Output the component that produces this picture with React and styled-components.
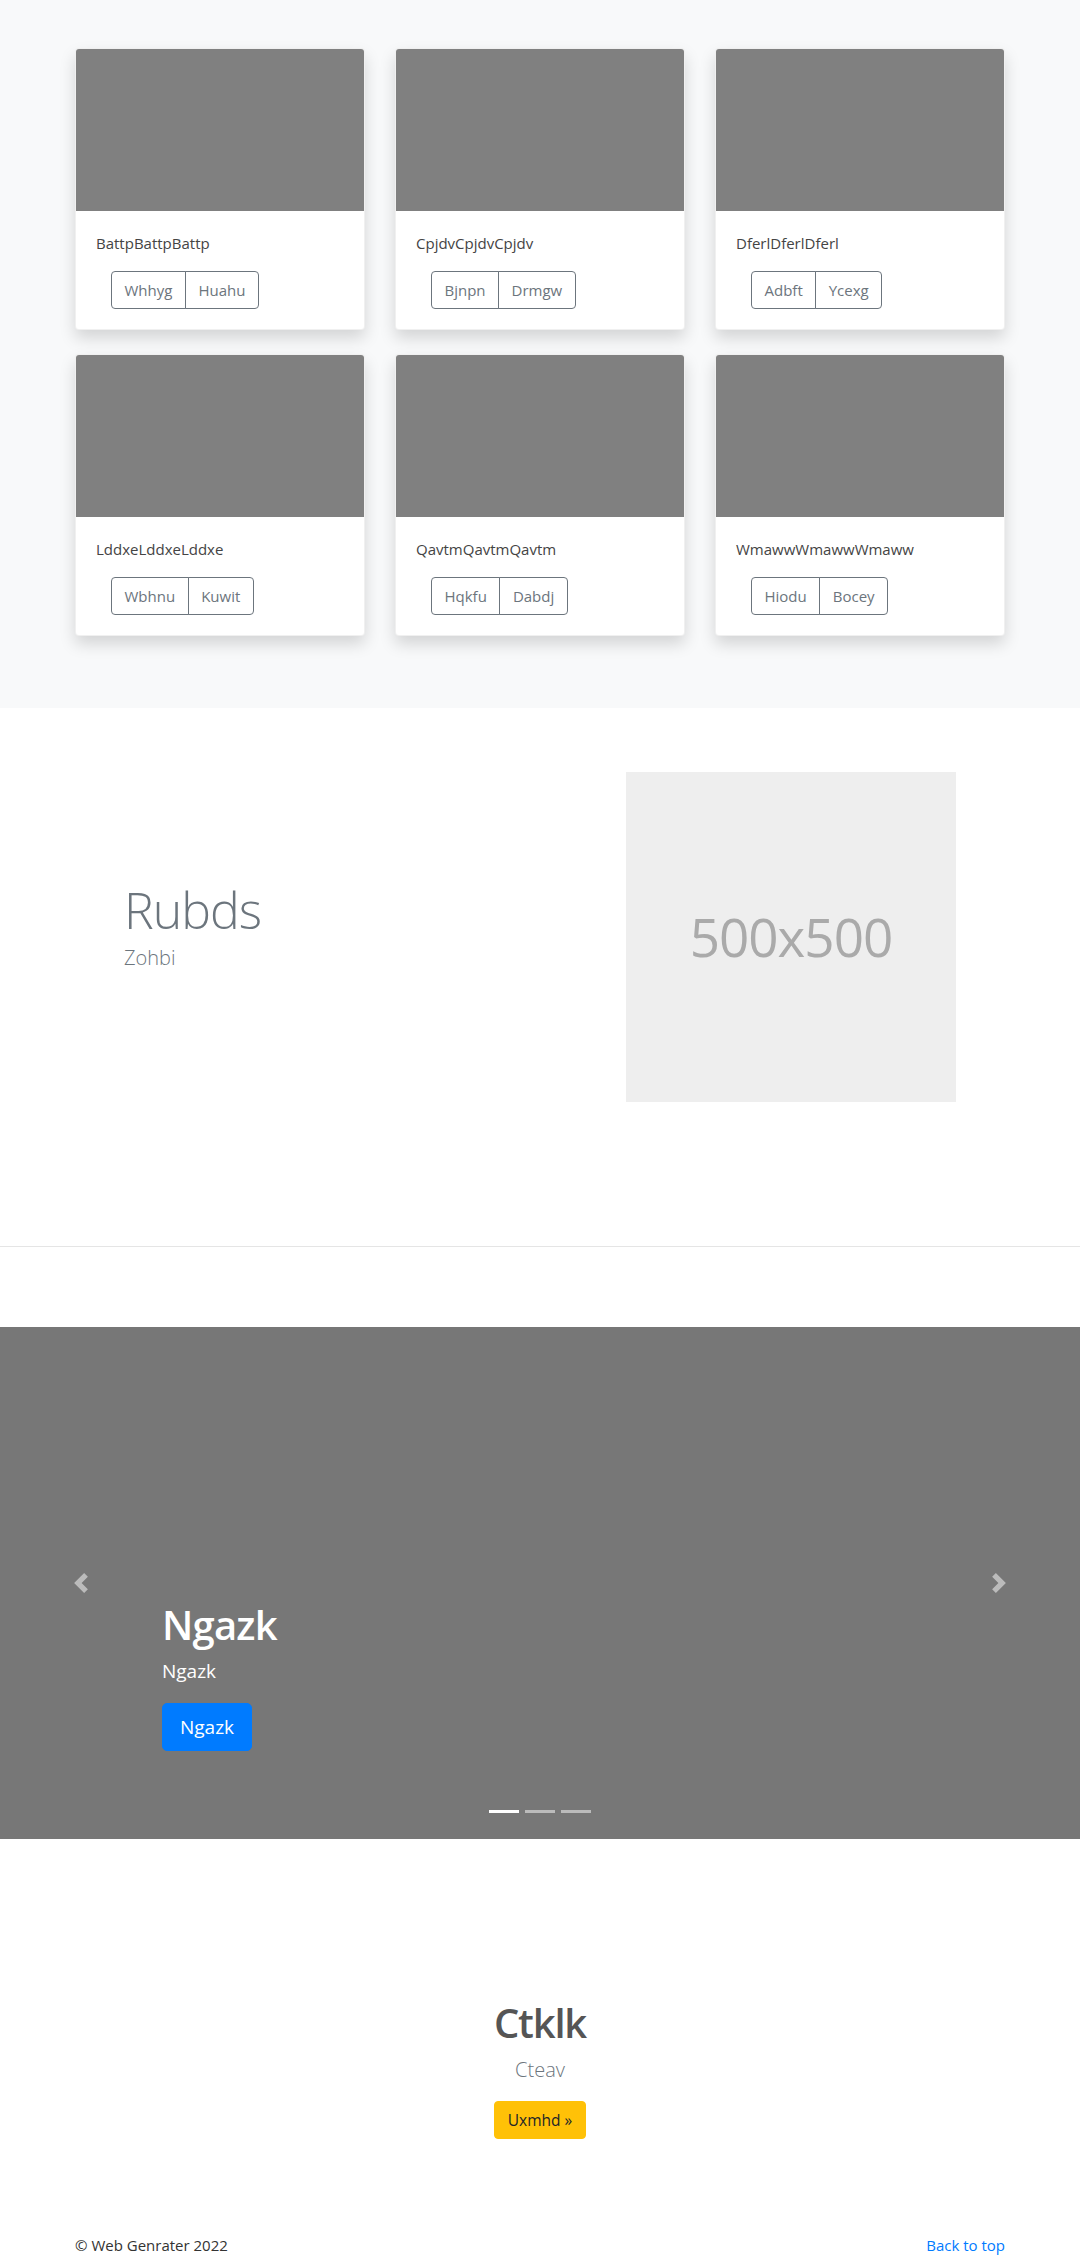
import React from "react";
import styled, { createGlobalStyle } from "styled-components";

const Global = createGlobalStyle`
  html, body { margin: 0; padding: 0; }
  body {
    font-family: "Open Sans", "Noto Sans", sans-serif;
    font-size: 16px;
    line-height: 1.5;
    color: #212529;
    background: #fff;
  }
  * { box-sizing: border-box; }
`;

const Container = styled.div`
  width: 930px;
  margin: 0 auto;
`;

const Album = styled.section`
  background: #f8f9fa;
  padding: 48px 0 72px;
`;

const CardGrid = styled.div`
  display: grid;
  grid-template-columns: repeat(3, 1fr);
  column-gap: 30px;
  row-gap: 24px;
`;

const Card = styled.div`
  background: #fff;
  border: 1px solid rgba(0, 0, 0, 0.06);
  border-radius: 4px;
  overflow: hidden;
  box-shadow: 0 8px 16px rgba(0, 0, 0, 0.15);
`;

const Thumb = styled.div`
  height: 162px;
  background: #808080;
`;

const CardBody = styled.div`
  padding: 20px;
`;

const CardText = styled.p`
  margin: 0 0 16px;
  font-size: 15px;
  line-height: 24px;
  color: #444;
`;

const BtnGroup = styled.div`
  display: inline-flex;
  margin-left: 15px;
`;

const OutlineBtn = styled.button`
  font-family: inherit;
  font-size: 15px;
  line-height: 24px;
  padding: 6px 12.5px;
  color: #6c757d;
  background: transparent;
  border: 1px solid #6c757d;
  border-radius: ${(p) => (p.$first ? "4px 0 0 4px" : "0 4px 4px 0")};
  margin-left: ${(p) => (p.$first ? "0" : "-1px")};
`;

const Featurette = styled.section`
  padding: 64px 0;
`;

const FeatRow = styled.div`
  display: grid;
  grid-template-columns: 1fr 330px;
  align-items: center;
  padding: 0 49px 0 49px;
`;

const FeatText = styled.div``;

const FeatHeading = styled.h2`
  margin: 0 0 8px;
  font-size: 50px;
  font-weight: 300;
  line-height: 1;
  letter-spacing: -1px;
  color: #6c757d;
`;

const Lead = styled.p`
  margin: 0 0 16px;
  font-size: 20px;
  font-weight: 300;
  color: #6c757d;
`;

const Placeholder = styled.div`
  width: 330px;
  height: 330px;
  background: #eee;
  display: flex;
  align-items: center;
  justify-content: center;
  color: #aaa;
  font-size: 53px;
  letter-spacing: -1px;
`;

const Divider = styled.hr`
  margin: 80px 0;
  border: 0;
  border-top: 1px solid #e5e5e5;
`;

const Carousel = styled.section`
  position: relative;
  height: 512px;
  background: #777;
  display: flex;
  align-items: flex-end;
  padding: 0 15% 88px;
`;

const Caption = styled.div`
  color: #fff;
`;

const CaptionTitle = styled.h1`
  margin: 0 0 8px;
  font-size: 40px;
  font-weight: 600;
  line-height: 1.2;
  letter-spacing: -0.8px;
`;

const CaptionText = styled.p`
  margin: 0 0 18px;
  font-size: 19px;
`;

const PrimaryBtn = styled.button`
  font-family: inherit;
  font-size: 19px;
  line-height: 30px;
  padding: 8px 17px;
  color: #fff;
  background: #007bff;
  border: 1px solid #007bff;
  border-radius: 5px;
`;

const Control = styled.div`
  position: absolute;
  top: 0;
  bottom: 0;
  width: 15%;
  ${(p) => (p.$side === "left" ? "left: 0;" : "right: 0;")}
  display: flex;
  align-items: center;
  justify-content: center;
`;

const Indicators = styled.div`
  position: absolute;
  left: 0;
  right: 0;
  bottom: 26px;
  display: flex;
  justify-content: center;
  gap: 6px;
`;

const Indicator = styled.span`
  width: 30px;
  height: 3px;
  background: #fff;
  opacity: ${(p) => (p.$active ? 1 : 0.5)};
`;

const Marketing = styled.section`
  padding: 160px 0 48px;
  text-align: center;
`;

const MarketTitle = styled.h1`
  margin: 0 0 8px;
  font-size: 40px;
  font-weight: 600;
  line-height: 1.2;
  letter-spacing: -1.2px;
  color: #555;
`;

const WarningBtn = styled.button`
  font-family: inherit;
  font-size: 15.5px;
  line-height: 24px;
  padding: 6px 13px;
  color: #212529;
  background: #ffc107;
  border: 1px solid #ffc107;
  border-radius: 4px;
`;

const Footer = styled.footer`
  padding-top: 47px;
`;

const FooterRow = styled(Container)`
  display: flex;
  justify-content: space-between;
  font-size: 15px;
`;

const FooterText = styled.p`
  margin: 0;
  color: #333;
`;

const FooterLink = styled.a`
  color: #007bff;
  text-decoration: none;
`;

const Chevron = ({ dir }) => (
  <svg width="20" height="20" viewBox="0 0 8 8" fill="#fff" opacity="0.5">
    {dir === "left" ? (
      <path d="M5.25 0l-4 4 4 4 1.5-1.5L4.25 4l2.5-2.5L5.25 0z" />
    ) : (
      <path d="M2.75 0l-1.5 1.5L3.75 4l-2.5 2.5L2.75 8l4-4-4-4z" />
    )}
  </svg>
);

const cards = [
  ["BattpBattpBattp", "Whhyg", "Huahu"],
  ["CpjdvCpjdvCpjdv", "Bjnpn", "Drmgw"],
  ["DferlDferlDferl", "Adbft", "Ycexg"],
  ["LddxeLddxeLddxe", "Wbhnu", "Kuwit"],
  ["QavtmQavtmQavtm", "Hqkfu", "Dabdj"],
  ["WmawwWmawwWmaww", "Hiodu", "Bocey"],
];

export default function App() {
  return (
    <>
      <Global />
      <Album>
        <Container>
          <CardGrid>
            {cards.map(([t, a, b]) => (
              <Card key={t}>
                <Thumb />
                <CardBody>
                  <CardText>{t}</CardText>
                  <BtnGroup>
                    <OutlineBtn $first>{a}</OutlineBtn>
                    <OutlineBtn>{b}</OutlineBtn>
                  </BtnGroup>
                </CardBody>
              </Card>
            ))}
          </CardGrid>
        </Container>
      </Album>

      <Featurette>
        <Container>
          <FeatRow>
            <FeatText>
              <FeatHeading>Rubds</FeatHeading>
              <Lead>Zohbi</Lead>
            </FeatText>
            <Placeholder>500x500</Placeholder>
          </FeatRow>
        </Container>
      </Featurette>

      <Divider />

      <Carousel>
        <Caption>
          <CaptionTitle>Ngazk</CaptionTitle>
          <CaptionText>Ngazk</CaptionText>
          <PrimaryBtn>Ngazk</PrimaryBtn>
        </Caption>
        <Control $side="left">
          <Chevron dir="left" />
        </Control>
        <Control $side="right">
          <Chevron dir="right" />
        </Control>
        <Indicators>
          <Indicator $active />
          <Indicator />
          <Indicator />
        </Indicators>
      </Carousel>

      <Marketing>
        <MarketTitle>Ctklk</MarketTitle>
        <Lead>Cteav</Lead>
        <WarningBtn>Uxmhd »</WarningBtn>
      </Marketing>

      <Footer>
        <FooterRow>
          <FooterText>© Web Genrater 2022</FooterText>
          <FooterLink href="#">Back to top</FooterLink>
        </FooterRow>
      </Footer>
    </>
  );
}
